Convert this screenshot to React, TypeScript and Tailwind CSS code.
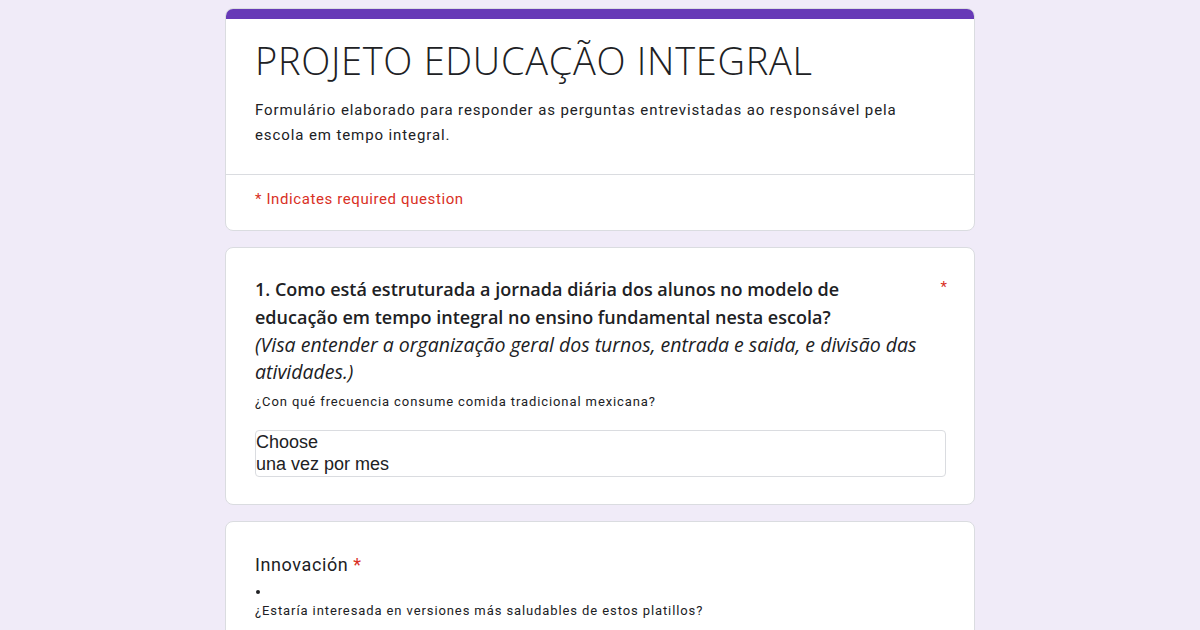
import React from 'react';

const App: React.FC = () => {
  return (
    <div className="min-h-screen w-full bg-[#f0ebf8] pt-2 pb-4" style={{ fontFamily: 'Roboto, "Noto Sans", sans-serif' }}>
      <div className="mx-auto flex w-[750px] flex-col gap-4">
        {/* Cabeçalho */}
        <div className="overflow-hidden rounded-lg border border-[#dadce0] bg-white">
          <div className="h-[10px] bg-[#673ab7]" />
          <div className="px-[29px] pt-[17px] pb-[26px]">
            <h1 className="text-[38px] leading-[48px] font-light tracking-[0.7px] text-[#202124]" style={{ fontFamily: '"Open Sans", Roboto, sans-serif' }}>
              PROJETO EDUCAÇÃO INTEGRAL
            </h1>
            <p className="mt-[14px] w-[660px] text-[15px] leading-[25px] tracking-[0.9px] text-[#202124]">
              Formulário elaborado para responder as perguntas entrevistadas ao responsável pela escola em tempo integral.
            </p>
          </div>
          <div className="border-t border-[#dadce0] px-[29px] pt-[12px] pb-[19px]">
            <p className="text-[15px] leading-[24px] tracking-[0.6px] text-[#d93025]">* Indicates required question</p>
          </div>
        </div>

        {/* Pergunta 1 */}
        <div className="rounded-lg border border-[#dadce0] bg-white px-[29px] pt-[27px] pb-[27px]">
          <div className="flex justify-between">
            <div className="w-[680px]">
              <p className="w-[660px] text-[18px] leading-[28px] font-semibold text-[#202124]" style={{ fontFamily: '"Open Sans", Roboto, sans-serif' }}>
                1. Como está estruturada a jornada diária dos alunos no modelo de educação em tempo integral no ensino fundamental nesta escola?
              </p>
              <p className="text-[19.5px] leading-[27px] italic text-[#202124]" style={{ fontFamily: '"Open Sans", Roboto, sans-serif' }}>
                (Visa entender a organização geral dos turnos, entrada e saida, e divisão das atividades.)
              </p>
            </div>
            <span className="mr-[-2px] text-[15px] leading-[24px] text-[#d93025]">*</span>
          </div>
          <p className="mt-[7px] text-[13px] leading-[20px] tracking-[0.9px] text-[#202124]">¿Con qué frecuencia consume comida tradicional mexicana?</p>
          <div className="mt-[18px] w-[691px] rounded border border-[#dadce0] pb-[1px] text-[18px] leading-[22px] text-[#202124]" style={{ fontFamily: '"Liberation Sans", Arial, sans-serif' }}>
            <div>Choose</div>
            <div>una vez por mes</div>
          </div>
        </div>

        {/* Pergunta 2 */}
        <div className="rounded-lg border border-[#dadce0] bg-white px-[29px] pt-[31px] pb-[40px]">
          <p className="text-[18px] leading-[24px] tracking-[0.6px] text-[#202124]">
            Innovación <span className="text-[#d93025]">*</span>
          </p>
          <div className="mt-[9px] flex h-[12px] items-center pl-[1px]">
            <span className="h-[4px] w-[4px] rounded-full bg-[#202124]" />
          </div>
          <p className="mt-[3px] text-[13px] leading-[20px] tracking-[0.9px] text-[#202124]">¿Estaría interesada en versiones más saludables de estos platillos?</p>
        </div>
      </div>
    </div>
  );
};

export default App;
